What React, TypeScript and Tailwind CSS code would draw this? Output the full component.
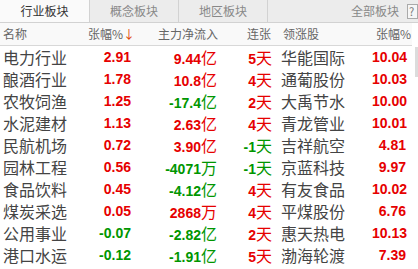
import React from 'react';

type Tone = 'up' | 'down';

interface Row {
  name: string;
  pct: string;
  pctTone: Tone;
  flow: string;
  flowUnit: string;
  flowTone: Tone;
  days: string;
  daysTone: Tone;
  leader: string;
  leaderPct: string;
}

const rows: Row[] = [
  { name: '电力行业', pct: '2.91', pctTone: 'up', flow: '9.44', flowUnit: '亿', flowTone: 'up', days: '5', daysTone: 'up', leader: '华能国际', leaderPct: '10.04' },
  { name: '酿酒行业', pct: '1.78', pctTone: 'up', flow: '10.8', flowUnit: '亿', flowTone: 'up', days: '4', daysTone: 'up', leader: '通葡股份', leaderPct: '10.03' },
  { name: '农牧饲渔', pct: '1.25', pctTone: 'up', flow: '-17.4', flowUnit: '亿', flowTone: 'down', days: '2', daysTone: 'up', leader: '大禹节水', leaderPct: '10.00' },
  { name: '水泥建材', pct: '1.13', pctTone: 'up', flow: '2.63', flowUnit: '亿', flowTone: 'up', days: '4', daysTone: 'up', leader: '青龙管业', leaderPct: '10.01' },
  { name: '民航机场', pct: '0.72', pctTone: 'up', flow: '3.90', flowUnit: '亿', flowTone: 'up', days: '-1', daysTone: 'down', leader: '吉祥航空', leaderPct: '4.81' },
  { name: '园林工程', pct: '0.56', pctTone: 'up', flow: '-4071', flowUnit: '万', flowTone: 'down', days: '-1', daysTone: 'down', leader: '京蓝科技', leaderPct: '9.97' },
  { name: '食品饮料', pct: '0.45', pctTone: 'up', flow: '-4.12', flowUnit: '亿', flowTone: 'down', days: '4', daysTone: 'up', leader: '有友食品', leaderPct: '10.02' },
  { name: '煤炭采选', pct: '0.05', pctTone: 'up', flow: '2868', flowUnit: '万', flowTone: 'up', days: '4', daysTone: 'up', leader: '平煤股份', leaderPct: '6.76' },
  { name: '公用事业', pct: '-0.07', pctTone: 'down', flow: '-2.82', flowUnit: '亿', flowTone: 'down', days: '2', daysTone: 'up', leader: '惠天热电', leaderPct: '10.13' },
  { name: '港口水运', pct: '-0.12', pctTone: 'down', flow: '-1.91', flowUnit: '亿', flowTone: 'down', days: '5', daysTone: 'up', leader: '渤海轮渡', leaderPct: '7.39' },
];

const tone = (t: Tone) => (t === 'up' ? 'text-[#e60000]' : 'text-[#009600]');

const cjk = { fontFamily: '"Noto Sans CJK SC", "Liberation Sans", sans-serif' };
const num = { fontFamily: '"Liberation Sans", Arial, sans-serif' };

const App = () => {
  return (
    <div className="w-[418px] h-[269px] overflow-hidden bg-white" style={cjk}>
      {/* Tabs */}
      <div className="flex h-[23px] bg-[#ececec] border-b border-[#d2d2d2] text-[12px] leading-[22px]">
        <div className="w-[90px] bg-[#fafafa] border-r border-[#d2d2d2] text-center text-[#333]">行业板块</div>
        <div className="w-[89px] border-r border-[#d2d2d2] text-center text-[#888]">概念板块</div>
        <div className="w-[89px] border-r border-[#d2d2d2] text-center text-[#888]">地区板块</div>
        <div className="flex-1 flex items-center justify-end text-[#888]">
          <span className="mr-[8px]">全部板块</span>
          <span className="w-[11px] h-[15px] border border-[#aaa] bg-[#f6f6f6] text-[11px] leading-[13px] pl-[1px] text-[#777]">?</span>
        </div>
      </div>

      <div className="flex">
        <div className="w-[412px]">
          {/* Header */}
          <div className="flex h-[23px] items-center bg-[#f9f9f9] border-b border-[#d8d8d8] text-[12px] text-[#666]">
            <div className="w-[88px] pl-[3px]">名称</div>
            <div className="w-[42px] text-right whitespace-nowrap">
              张幅%<span className="text-[#e04000]">↓</span>
            </div>
            <div className="w-[88px] text-right">主力净流入</div>
            <div className="w-[53px] text-right">连张</div>
            <div className="w-[12px]" />
            <div className="flex-1">领涨股</div>
            <div className="w-[40px] text-right pr-[1px]">张幅%</div>
          </div>

          {/* Rows */}
          {rows.map((r) => (
            <div key={r.name} className="flex h-[22px] items-center text-[16px] leading-none">
              <div className="w-[88px] pl-[3px] text-[#444]">{r.name}</div>
              <div className={`w-[43px] text-right font-bold text-[14px] ${tone(r.pctTone)}`} style={num}>
                {r.pct}
              </div>
              <div className={`w-[86px] text-right whitespace-nowrap ${tone(r.flowTone)}`}>
                <span className="font-bold text-[14px]" style={num}>{r.flow}</span>
                <span>{r.flowUnit}</span>
              </div>
              <div className={`w-[55px] text-right whitespace-nowrap ${tone(r.daysTone)}`}>
                <span className="font-bold text-[14px]" style={num}>{r.days}</span>
                <span>天</span>
              </div>
              <div className="w-[9px]" />
              <div className="flex-1 text-[#444]">{r.leader}</div>
              <div className="w-[40px] text-right font-bold text-[14px] text-[#e60000] pr-[6px]" style={num}>
                {r.leaderPct}
              </div>
            </div>
          ))}
        </div>

        {/* Scrollbar */}
        <div className="flex-1 flex justify-end">
          <div className="w-[3px] h-[30px] mt-[24px] bg-[#dcdcdc]" />
        </div>
      </div>
    </div>
  );
};

export default App;
